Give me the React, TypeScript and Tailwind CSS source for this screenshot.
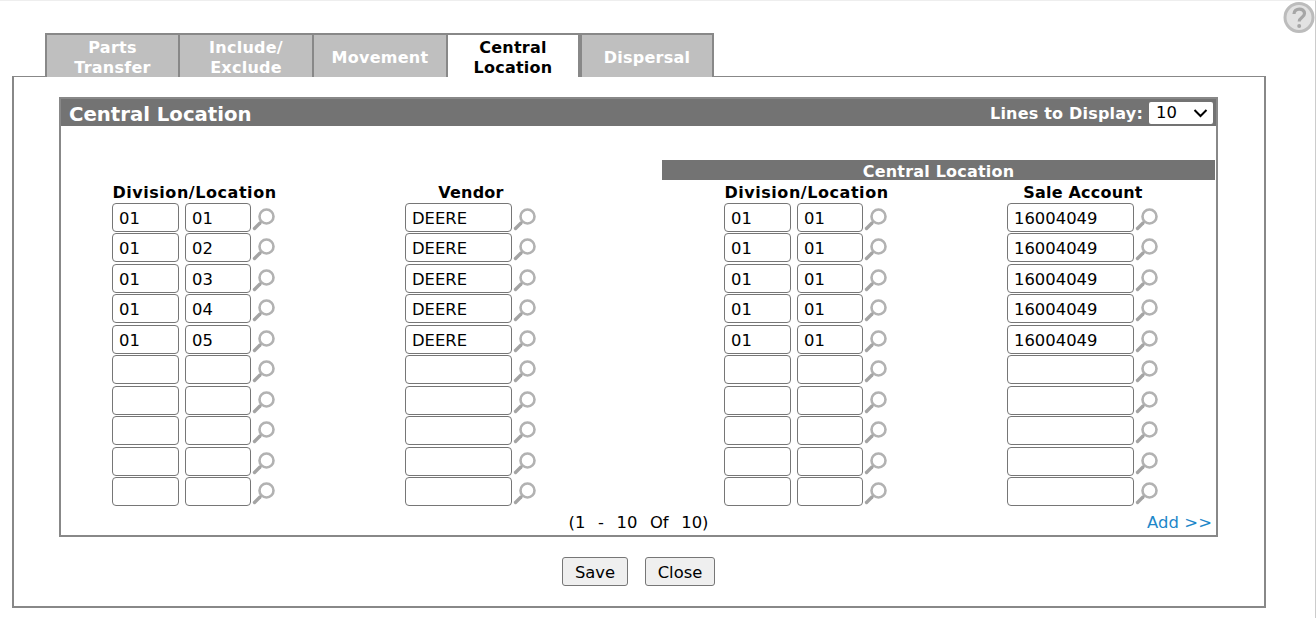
import React from 'react';

const tabs = [
  { label: 'Parts Transfer', width: 'w-[133px]', active: false, wrap: 'max-w-[90px]' },
  { label: 'Include/ Exclude', width: 'w-[134px]', active: false, wrap: 'max-w-[90px]' },
  { label: 'Movement', width: 'w-[134px]', active: false, wrap: '' },
  { label: 'Central Location', width: 'w-[134px]', active: true, wrap: 'max-w-[90px]' },
  { label: 'Dispersal', width: 'w-[134px]', active: false, wrap: '' },
];

const rows = [
  { loc: '01', vendor: 'DEERE' },
  { loc: '02', vendor: 'DEERE' },
  { loc: '03', vendor: 'DEERE' },
  { loc: '04', vendor: 'DEERE' },
  { loc: '05', vendor: 'DEERE' },
  null,
  null,
  null,
  null,
  null,
];

const SearchIcon: React.FC = () => (
  <svg width="26" height="26" viewBox="0 0 26 26" className="shrink-0 mt-[2px]" style={{ filter: 'blur(0.4px)' }}>
    <circle cx="15.5" cy="11.5" r="7" fill="none" stroke="#b2b2b2" strokeWidth="2.6" />
    <path d="M9 18 L3.5 23.5" stroke="#a4a4a4" strokeWidth="3.4" strokeLinecap="round" />
  </svg>
);

const Field: React.FC<{ value?: string; className: string }> = ({ value, className }) => (
  <input
    readOnly
    value={value ?? ''}
    className={`${className} h-[29px] border border-[#767676] rounded-[4px] bg-white px-[6px] pt-[2px] text-[16.4px] text-black outline-none`}
  />
);

const Head: React.FC<{ children: React.ReactNode; className: string }> = ({ children, className }) => (
  <div className={`${className} h-[22px] leading-[26px] text-[16px] font-bold text-black text-center whitespace-nowrap`}>{children}</div>
);

const App: React.FC = () => {
  return (
    <div className="relative w-[1316px] h-[618px] overflow-hidden bg-white border-t border-t-[#eeeeee] border-r border-r-[#cccccc] font-['DejaVu_Sans',Verdana,sans-serif] text-black">
      <svg width="34" height="34" viewBox="0 0 34 34" className="absolute top-0 -right-px" style={{ filter: 'blur(0.5px)' }}>
        <circle cx="17" cy="16.5" r="14" fill="#e2e2e2" stroke="#bcbcbc" strokeWidth="3" />
        <path d="M12 13 C12 6.5 22.5 6.5 22.5 12.5 C22.5 16.5 17.2 16.5 17.2 20.5" fill="none" stroke="#a6a6a6" strokeWidth="3.2" />
        <circle cx="17.2" cy="25" r="2" fill="#a6a6a6" />
      </svg>

      <div className="pt-[32px] pl-[12px]">
        <div className="flex pl-[33px] h-[43px] relative z-10">
          {tabs.map((tab) => (
            <div
              key={tab.label}
              className={`${tab.width} h-[44px] pt-[4px] flex items-center justify-center border-2 border-[#888888] text-center text-[16px] tracking-[0.25px] leading-[20px] font-bold ${
                tab.active ? 'bg-white text-black border-b-0' : 'bg-[#bfbfbf] text-white border-b-0 border-r-0 last:border-r-2'
              }`}
            >
              <span className={tab.wrap}>{tab.label}</span>
            </div>
          ))}
        </div>

        <div className="w-[1254px] h-[532px] border-2 border-t border-[#888888] bg-white pt-[20px] pl-[45px]">
          <div className="w-[1159px] h-[440px] border-2 border-[#888888]">
            <div className="h-[27px] bg-[#737373] flex items-center justify-between pl-[8px] pr-[3px] text-white font-bold">
              <span className="text-[19.7px] pt-[4px]">Central Location</span>
              <div className="flex items-center gap-[6px]">
                <span className="text-[16px] tracking-[0.2px] pt-[3px]">Lines to Display:</span>
                <div className="w-[64px] h-[22px] bg-white rounded-[2px] text-black font-normal text-[16.4px] flex items-center justify-between pl-[7px] pr-[5px]">
                  <span className="pt-[2px]">10</span>
                  <svg width="15" height="14" viewBox="0 0 15 14">
                    <path d="M1.5 4 L7.5 10 L13.5 4" fill="none" stroke="#000" strokeWidth="2" />
                  </svg>
                </div>
              </div>
            </div>

            <div className="mt-[34px] flex justify-end pr-[1px]">
              <div className="w-[553px] h-[20px] bg-[#737373] text-white text-center font-bold text-[16px] tracking-[0.2px] leading-[24px]">Central Location</div>
            </div>

            <div className="flex h-[22px] text-black">
              <Head className="ml-[51px] w-[165px] tracking-[0.55px]">Division/Location</Head>
              <Head className="ml-[128px] w-[132px] tracking-[0.2px]">Vendor</Head>
              <Head className="ml-[187px] w-[165px] tracking-[0.55px]">Division/Location</Head>
              <Head className="ml-[119px] w-[150px] tracking-[0.2px]">Sale Account</Head>
            </div>

            <div className="pl-[51px] mt-[1px]">
              {rows.map((row, i) => (
                <div key={i} className="flex items-start h-[30.45px]">
                  <Field value={row ? '01' : ''} className="w-[67px]" />
                  <Field value={row ? row.loc : ''} className="w-[66px] ml-[6px]" />
                  <SearchIcon />
                  <Field value={row ? row.vendor : ''} className="w-[107px] ml-[128px]" />
                  <SearchIcon />
                  <Field value={row ? '01' : ''} className="w-[67px] ml-[186px]" />
                  <Field value={row ? '01' : ''} className="w-[66px] ml-[6px]" />
                  <SearchIcon />
                  <Field value={row ? '16004049' : ''} className="w-[127px] ml-[118px]" />
                  <SearchIcon />
                </div>
              ))}
            </div>

            <div className="relative h-[24px] leading-[24px] text-center text-[16.4px] mt-[4px] whitespace-pre">
              <span className="[word-spacing:1.1px]">(1  -  10  Of  10)</span>
              <span className="absolute right-[4px] top-0 text-[#1e87c9] tracking-[0.1px]">Add &gt;&gt;</span>
            </div>
          </div>

          <div className="mt-[20px] pl-[503px] flex gap-[17px]">
            <button className="w-[66px] h-[29px] pt-[3px] border border-[#767676] rounded-[3px] bg-[#efefef] text-[16.4px] text-black">Save</button>
            <button className="w-[70px] h-[29px] pt-[3px] border border-[#767676] rounded-[3px] bg-[#efefef] text-[16.4px] text-black">Close</button>
          </div>
        </div>
      </div>
    </div>
  );
};

export default App;
